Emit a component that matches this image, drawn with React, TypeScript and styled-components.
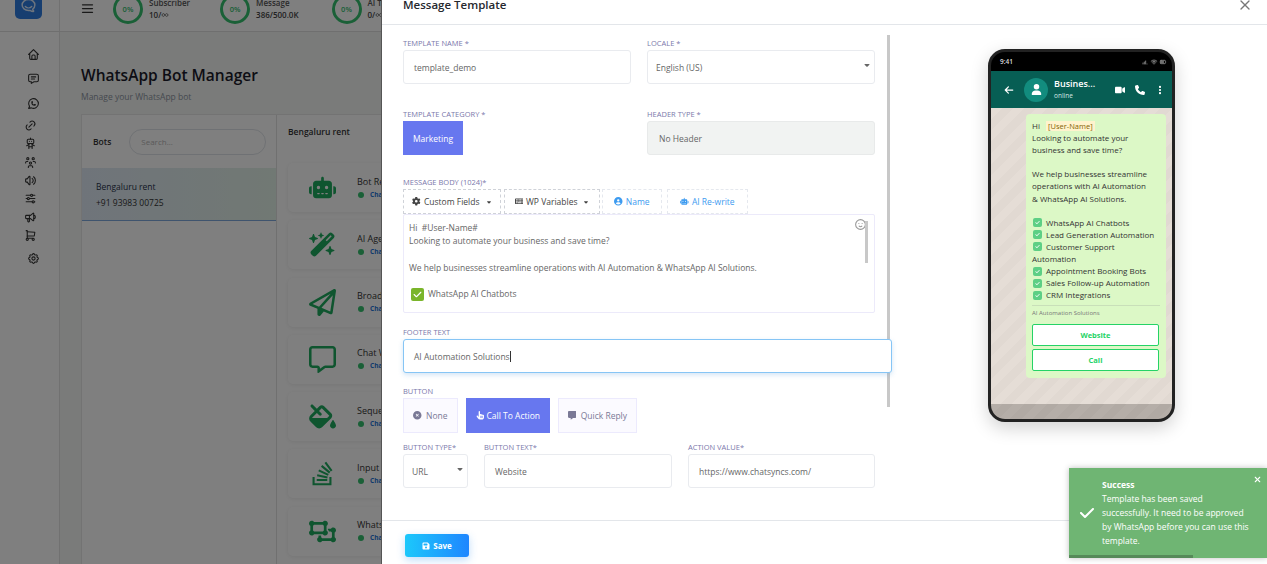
import React from "react";
import styled, { createGlobalStyle } from "styled-components";
import {
  FaRobot,
  FaWandMagicSparkles,
  FaRegPaperPlane,
  FaRegMessage,
  FaFillDrip,
  FaStackOverflow,
  FaObjectUngroup,
  FaGear,
  FaKeyboard,
  FaCircleUser,
  FaCircleXmark,
  FaHandPointer,
  FaMessage,
  FaFloppyDisk,
  FaCheck,
  FaArrowLeft,
  FaVideo,
  FaPhone,
  FaEllipsisVertical,
  FaXmark,
  FaUser,
  FaCaretDown,
} from "react-icons/fa6";
import {
  TbHome,
  TbMessage,
  TbBrandWhatsapp,
  TbLink,
  TbRobot,
  TbUsersGroup,
  TbVolume,
  TbAdjustmentsHorizontal,
  TbSpeakerphone,
  TbShoppingCart,
  TbSettings,
  TbMenu2,
  TbInfinity,
  TbMoodSmile,
  TbX,
  TbBrandHipchat,
  TbAntennaBars4,
  TbWifi,
  TbBattery3,
} from "react-icons/tb";

const GlobalStyle = createGlobalStyle`
  html, body {
    margin: 0;
    padding: 0;
    overflow: hidden;
  }
  * {
    box-sizing: border-box;
  }
  body {
    font-family: "Open Sans", "Liberation Sans", sans-serif;
  }
`;

const Screen = styled.div`
  position: relative;
  width: 1267px;
  height: 564px;
  overflow: hidden;
  background: #f4f7f5;
`;

/* page behind the modal */
const Shell = styled.div`
  display: flex;
  margin-top: -8px;
  height: 572px;
`;
const Sidebar = styled.aside`
  width: 60px;
  flex: none;
  background: #fff;
  border-right: 1px solid #e2e2e2;
`;
const LogoRow = styled.div`
  height: 40px;
  padding-left: 15px;
  border-bottom: 1px solid #dedede;
  margin-right: -1px;
`;
const Logo = styled.div`
  width: 27px;
  height: 27px;
  border-radius: 5px;
  background: #2f7de1;
  color: #dbe9fb;
  display: flex;
  align-items: center;
  justify-content: center;
  font-size: 17px;
`;
const NavList = styled.nav`
  display: flex;
  flex-direction: column;
  padding-top: 10px;
`;
const NavIcon = styled.div<{ $left: number; $h: number }>`
  height: ${({ $h }) => $h}px;
  padding-left: ${({ $left }) => $left}px;
  display: flex;
  align-items: center;
  color: #333;
  font-size: 13px;
`;

const Main = styled.main`
  flex: 1;
  min-width: 0;
`;
const TopBar = styled.header`
  height: 40px;
  background: #fff;
  border-bottom: 1px solid #dedede;
  display: flex;
  align-items: center;
  padding: 0 0 6px 20px;
  color: #333;
  font-size: 15px;
`;
const StatGroup = styled.div<{ $left: number }>`
  display: flex;
  align-items: center;
  margin-left: ${({ $left }) => $left}px;
  gap: 6px;
`;
const Ring = styled.div`
  width: 30px;
  height: 30px;
  border-radius: 50%;
  border: 3px solid #35c06f;
  color: #35c06f;
  font-size: 7.5px;
  font-weight: 600;
  display: flex;
  align-items: center;
  justify-content: center;
`;
const StatText = styled.div`
  font-size: 8px;
  line-height: 12px;
  color: #555;
  font-weight: 600;
  white-space: nowrap;
  display: flex;
  flex-direction: column;
`;
const StatValue = styled.span`
  display: flex;
  align-items: center;
  color: #444;
`;
const PageBody = styled.div`
  padding: 32px 0 0 21px;
`;
const PageTitle = styled.h1`
  margin: 0;
  font-size: 15.5px;
  line-height: 22px;
  font-weight: 600;
  color: #1b1b2a;
`;
const PageSub = styled.p`
  margin: 5px 0 0;
  font-size: 8.5px;
  line-height: 12px;
  color: #8c93a0;
`;
const ManagerCard = styled.div`
  margin-top: 11px;
  display: flex;
  background: #fff;
  border: 1px solid #e6e6e6;
  height: 470px;
`;
const BotsPane = styled.div`
  width: 195px;
  flex: none;
  border-right: 1px solid #e0e0e0;
`;
const BotsHead = styled.div`
  height: 53px;
  display: flex;
  align-items: center;
  padding: 0 10px 0 11px;
  gap: 18px;
  font-size: 8.5px;
  font-weight: 600;
  color: #333;
`;
const BotSearch = styled.div`
  flex: 1;
  height: 26px;
  border: 1px solid #dfe3e8;
  border-radius: 13px;
  padding-left: 11px;
  display: flex;
  align-items: center;
  font-size: 8px;
  font-weight: 400;
  color: #b5b5b5;
`;
const BotItem = styled.div`
  height: 53px;
  padding: 11px 14px;
  background: linear-gradient(90deg, #dfe9f5, #e3f2e8);
  border-bottom: 1px solid #7fa8dc;
  font-size: 8.5px;
  line-height: 16px;
  color: #26314a;
`;
const BotPhone = styled.div`
  color: #333;
`;
const FeaturesPane = styled.div`
  flex: 1;
  min-width: 0;
  padding: 11px 11px 0;
`;
const FeaturesTitle = styled.div`
  font-size: 8.5px;
  font-weight: 600;
  color: #333;
  margin-bottom: 26px;
`;
const FeatureList = styled.div`
  display: flex;
  flex-direction: column;
  gap: 8.3px;
`;
const FeatureCard = styled.div`
  height: 49px;
  display: flex;
  align-items: center;
  background: #fff;
  border-radius: 5px;
  box-shadow: 0 1px 4px rgba(0, 0, 0, 0.08);
`;
const FeatureIcon = styled.div`
  width: 69px;
  flex: none;
  display: flex;
  justify-content: center;
  color: #1faa5f;
  font-size: 27px;
`;
const FeatureName = styled.div`
  font-size: 9px;
  line-height: 14px;
  color: #333;
  white-space: nowrap;
`;
const FeatureStatus = styled.div`
  display: flex;
  align-items: center;
  gap: 6px;
  font-size: 6.5px;
  font-weight: 700;
  line-height: 12px;
  color: #1d74d8;
  white-space: nowrap;
`;
const StatusDot = styled.span`
  width: 6px;
  height: 6px;
  border-radius: 50%;
  background: #35c06f;
  margin-left: 1px;
`;

const Backdrop = styled.div`
  position: absolute;
  inset: 0;
  background: rgba(0, 0, 0, 0.5);
`;

/* modal */
const Modal = styled.section`
  position: absolute;
  top: 0;
  right: 0;
  bottom: 0;
  width: 886px;
  background: #fff;
  display: flex;
  flex-direction: column;
  border-left: 1px solid #555;
`;
const ModalHead = styled.div`
  height: 25px;
  flex: none;
  border-bottom: 1px solid #e3e6ea;
  padding-left: 21px;
  display: flex;
  justify-content: space-between;
`;
const ModalTitle = styled.h2`
  margin: -5px 0 0;
  font-size: 11.5px;
  line-height: 20px;
  font-weight: 600;
  color: #25282e;
`;
const CloseButton = styled.div`
  color: #777;
  font-size: 16px;
  margin: -4px 14px 0 0;
  height: 16px;
`;
const ModalBody = styled.div`
  flex: 1;
  display: flex;
  min-height: 0;
`;
const FormPane = styled.div`
  position: relative;
  width: 510px;
  flex: none;
  padding: 12px 0 0 21px;
`;
const PaneScroll = styled.div`
  position: absolute;
  left: 505px;
  top: 10px;
  width: 3px;
  height: 372px;
  background: #c8c8c8;
`;
const Row = styled.div<{ $columns: string; $gap: number; $top?: number }>`
  display: grid;
  grid-template-columns: ${({ $columns }) => $columns};
  column-gap: ${({ $gap }) => $gap}px;
  width: 472px;
  margin-top: ${({ $top }) => $top ?? 0}px;
`;
const Label = styled.div<{ $top?: number }>`
  height: 13px;
  margin-top: ${({ $top }) => $top ?? 0}px;
  font-size: 7.5px;
  line-height: 13px;
  color: #7b78ab;
  white-space: nowrap;
`;
const Box = styled.div<{ $focus?: boolean; $muted?: boolean; $width?: number }>`
  position: relative;
  height: ${({ $focus }) => ($focus ? 34 : 34)}px;
  width: ${({ $width }) => ($width ? `${$width}px` : "auto")};
  background: ${({ $muted }) => ($muted ? "#f1f3f2" : "#fff")};
  border: 1px solid ${({ $focus, $muted }) => ($focus ? "#86c5f5" : $muted ? "#e8eaea" : "#e9ebef")};
  border-radius: 3px;
  padding-left: ${({ $muted }) => ($muted ? 11 : 10)}px;
  display: flex;
  align-items: center;
  font-size: 8.5px;
  color: #666;
  white-space: nowrap;
  box-shadow: ${({ $focus }) => ($focus ? "0 2px 5px rgba(80,150,220,.25)" : "none")};
`;
const SelectBox = styled(Box)<{ $pad: number }>`
  padding-left: ${({ $pad }) => $pad}px;
`;
const Arrow = styled.span`
  position: absolute;
  right: 3px;
  top: 9px;
  font-size: 8px;
  color: #666;
`;
const Caret = styled.span`
  display: inline-block;
  width: 1px;
  height: 11px;
  background: #333;
  margin-left: 0;
`;
const ChoiceRow = styled.div`
  display: flex;
  gap: 8px;
`;
const Choice = styled.div<{ $active?: boolean; $width: number }>`
  width: ${({ $width }) => $width}px;
  height: 35px;
  display: flex;
  align-items: center;
  justify-content: center;
  gap: 2px;
  font-size: 8.5px;
  color: ${({ $active }) => ($active ? "#fff" : "#7a7996")};
  background: ${({ $active }) => ($active ? "#6777ef" : "#fbfaff")};
  border: 1px solid ${({ $active }) => ($active ? "#6777ef" : "#eceafd")};
  white-space: nowrap;
`;
const CategoryChoice = styled(Choice)`
  height: 34px;
`;
const ToolRow = styled.div`
  display: flex;
  height: 25px;
`;
const ToolButton = styled.div<{ $width: number; $left: number; $link?: boolean }>`
  width: ${({ $width }) => $width}px;
  margin-left: ${({ $left }) => $left}px;
  display: flex;
  align-items: center;
  justify-content: center;
  gap: 3px;
  font-size: 8.5px;
  color: ${({ $link }) => ($link ? "#3d9bf0" : "#444")};
  border: 1px dashed ${({ $link }) => ($link ? "#e5e8ee" : "#cfd2d8")};
  white-space: nowrap;
`;
const SmallCaret = styled.span`
  font-size: 6px;
  margin-left: 3px;
  display: flex;
`;
const MessageBox = styled.div`
  position: relative;
  width: 472px;
  height: 99px;
  border: 1px solid #eceafa;
  border-radius: 2px;
  padding: 6px 5px;
  font-size: 8.5px;
  line-height: 13.3px;
  color: #666;
  white-space: nowrap;
`;
const BodyScroll = styled.div`
  position: absolute;
  right: 6px;
  top: 6px;
  width: 3px;
  height: 42px;
  background: #c8c8c8;
`;
const Smiley = styled.div`
  position: absolute;
  right: 7px;
  top: 3px;
  font-size: 13px;
  line-height: 13px;
  color: #999;
`;
const Blank = styled.div`
  height: 13.3px;
`;
const CheckLine = styled.div`
  display: flex;
  align-items: center;
  gap: 4px;
  margin-left: 2px;
  height: 13.3px;
`;
const GreenCheck = styled.span<{ $size: number; $color: string }>`
  width: ${({ $size }) => $size}px;
  height: ${({ $size }) => $size}px;
  flex: none;
  border-radius: 2px;
  background: ${({ $color }) => $color};
  color: #fff;
  font-size: ${({ $size }) => $size - 4}px;
  display: inline-flex;
  align-items: center;
  justify-content: center;
`;
const ModalFoot = styled.div`
  height: 44px;
  flex: none;
  border-top: 1px solid #e3e6ea;
  padding: 13px 0 0 23px;
`;
const SaveButton = styled.div`
  width: 64px;
  height: 23px;
  border-radius: 3px;
  background: linear-gradient(90deg, #1cc8fb, #1e86ff);
  color: #fff;
  font-size: 8px;
  font-weight: 700;
  display: flex;
  align-items: center;
  justify-content: center;
  gap: 3px;
  box-shadow: 0 3px 8px rgba(40, 140, 240, 0.3);
`;

/* phone preview */
const PreviewPane = styled.div`
  flex: 1;
  padding: 24px 0 0 96px;
`;
const Phone = styled.div`
  width: 187px;
  height: 373px;
  background: #000;
  border: 3px solid #222;
  border-radius: 17px;
  overflow: hidden;
  display: flex;
  flex-direction: column;
  box-shadow: 0 6px 18px rgba(0, 0, 0, 0.18);
`;
const StatusBar = styled.div`
  height: 19px;
  flex: none;
  display: flex;
  align-items: center;
  justify-content: space-between;
  padding: 0 5px 0 9px;
  color: #ddd;
  font-size: 6.5px;
  font-weight: 600;
`;
const StatusIcons = styled.div`
  display: flex;
  align-items: center;
  gap: 1px;
  font-size: 8px;
  color: #bbb;
`;
const ChatHead = styled.div`
  height: 37px;
  flex: none;
  background: #075e54;
  color: #fff;
  display: flex;
  align-items: center;
  padding: 0 5px 0 13px;
  font-size: 10px;
`;
const Avatar = styled.div`
  width: 24px;
  height: 24px;
  margin-left: 10px;
  border-radius: 50%;
  background: #128c7e;
  display: flex;
  align-items: center;
  justify-content: center;
  font-size: 11px;
`;
const ChatName = styled.div`
  margin-left: 6px;
  width: 55px;
  font-size: 9px;
  line-height: 12px;
  font-weight: 600;
  white-space: nowrap;
`;
const ChatOnline = styled.div`
  font-size: 6.5px;
  line-height: 11px;
  font-weight: 400;
  color: #d5e8e5;
`;
const ChatActions = styled.div`
  display: flex;
  align-items: center;
  gap: 10px;
  margin-left: 6px;
`;
const ChatArea = styled.div`
  flex: 1;
  min-height: 0;
  padding: 6px 0 0 35px;
  background: repeating-linear-gradient(135deg, #e5ddd6 0 8px, #e1d9d2 8px 16px);
`;
const Bubble = styled.div`
  width: 140px;
  height: 264px;
  padding: 6px 6px 0;
  background: #dcf8c6;
  border-radius: 4px;
  font-size: 8px;
  line-height: 12.1px;
  color: #333;
`;
const BubbleLine = styled.div`
  white-space: nowrap;
  min-height: 12.1px;
`;
const Mention = styled.span`
  margin-left: 4px;
  padding: 0 2px;
  background: #fff3cd;
  color: #856404;
  font-size: 7.5px;
`;
const BubbleCheck = styled(BubbleLine)`
  display: flex;
  align-items: center;
  gap: 4px;
  margin-left: 1px;
`;
const BubbleDivider = styled.div`
  margin-top: 4px;
  border-top: 1px solid #c9dfb9;
`;
const BubbleFooter = styled.div`
  font-size: 6px;
  line-height: 15px;
  color: #777;
  white-space: nowrap;
`;
const BubbleButton = styled.div`
  height: 22px;
  margin: 3px 1px 0 0;
  background: #fff;
  border: 1px solid #25d366;
  border-radius: 2px;
  color: #25d366;
  font-size: 7.5px;
  font-weight: 700;
  display: flex;
  align-items: center;
  justify-content: center;
`;
const ChatBar = styled.div`
  height: 15px;
  flex: none;
  background: repeating-linear-gradient(135deg, #b5aea8 0 8px, #b1aaa4 8px 16px);
`;

/* toast */
const Toast = styled.div`
  position: absolute;
  right: 0;
  bottom: 6px;
  width: 198px;
  height: 90px;
  background: #6fb573;
  color: #fff;
  display: flex;
  align-items: center;
  padding-left: 10px;
  box-shadow: 0 0 6px rgba(0, 0, 0, 0.25);
`;
const ToastCheck = styled.div`
  width: 23px;
  flex: none;
  font-size: 16px;
  display: flex;
`;
const ToastText = styled.div`
  font-size: 8.5px;
  line-height: 14px;
  white-space: nowrap;
`;
const ToastTitle = styled.div`
  font-weight: 700;
`;
const ToastClose = styled.div`
  position: absolute;
  right: 5px;
  top: 7px;
  font-size: 9px;
  display: flex;
`;
const ToastBar = styled.div`
  position: absolute;
  left: 0;
  bottom: 0;
  width: 124px;
  height: 3px;
  background: #568a59;
`;

const navItems = [
  { icon: <TbHome />, left: 27, h: 24 },
  { icon: <TbMessage />, left: 27, h: 25 },
  { icon: <TbBrandWhatsapp />, left: 27, h: 25 },
  { icon: <TbLink />, left: 24, h: 18 },
  { icon: <TbRobot />, left: 24, h: 19 },
  { icon: <TbUsersGroup />, left: 24, h: 18 },
  { icon: <TbVolume />, left: 24, h: 18 },
  { icon: <TbAdjustmentsHorizontal />, left: 24, h: 19 },
  { icon: <TbSpeakerphone />, left: 24, h: 18 },
  { icon: <TbShoppingCart />, left: 24, h: 18 },
  { icon: <TbSettings />, left: 27, h: 28 },
];

const features = [
  { name: "Bot Reply", icon: <FaRobot /> },
  { name: "AI Agent", icon: <FaWandMagicSparkles /> },
  { name: "Broadcast", icon: <FaRegPaperPlane /> },
  { name: "Chat Widget", icon: <FaRegMessage /> },
  { name: "Sequence", icon: <FaFillDrip /> },
  { name: "Input Flow", icon: <FaStackOverflow /> },
  { name: "WhatsApp Flow", icon: <FaObjectUngroup /> },
];

const stats = [
  { name: "Subscriber", value: "10/", infinite: true, left: 18 },
  { name: "Message", value: "386/500.0K", infinite: false, left: 30 },
  { name: "AI Token", value: "0/", infinite: true, left: 33 },
];

const checks = [
  "WhatsApp AI Chatbots",
  "Lead Generation Automation",
  "Customer Support",
];
const moreChecks = [
  "Appointment Booking Bots",
  "Sales Follow-up Automation",
  "CRM Integrations",
];

const App = () => {
  return (
    <Screen>
      <GlobalStyle />
      <Shell>
        <Sidebar>
          <LogoRow>
            <Logo>
              <TbBrandHipchat />
            </Logo>
          </LogoRow>
          <NavList>
            {navItems.map((item, i) => (
              <NavIcon key={i} $left={item.left} $h={item.h}>
                {item.icon}
              </NavIcon>
            ))}
          </NavList>
        </Sidebar>
        <Main>
          <TopBar>
            <TbMenu2 />
            {stats.map((s) => (
              <StatGroup key={s.name} $left={s.left}>
                <Ring>0%</Ring>
                <StatText>
                  {s.name}
                  <StatValue>
                    {s.value}
                    {s.infinite && <TbInfinity />}
                  </StatValue>
                </StatText>
              </StatGroup>
            ))}
          </TopBar>
          <PageBody>
            <PageTitle>WhatsApp Bot Manager</PageTitle>
            <PageSub>Manage your WhatsApp bot</PageSub>
            <ManagerCard>
              <BotsPane>
                <BotsHead>
                  Bots
                  <BotSearch>Search...</BotSearch>
                </BotsHead>
                <BotItem>
                  Bengaluru rent
                  <BotPhone>+91 93983 00725</BotPhone>
                </BotItem>
              </BotsPane>
              <FeaturesPane>
                <FeaturesTitle>Bengaluru rent</FeaturesTitle>
                <FeatureList>
                  {features.map((f) => (
                    <FeatureCard key={f.name}>
                      <FeatureIcon>{f.icon}</FeatureIcon>
                      <div>
                        <FeatureName>{f.name}</FeatureName>
                        <FeatureStatus>
                          <StatusDot />
                          Change settings
                        </FeatureStatus>
                      </div>
                    </FeatureCard>
                  ))}
                </FeatureList>
              </FeaturesPane>
            </ManagerCard>
          </PageBody>
        </Main>
      </Shell>
      <Backdrop />
      <Modal>
        <ModalHead>
          <ModalTitle>Message Template</ModalTitle>
          <CloseButton>
            <TbX />
          </CloseButton>
        </ModalHead>
        <ModalBody>
          <FormPane>
            <PaneScroll />
            <Row $columns="228px 228px" $gap={16}>
              <div>
                <Label>TEMPLATE NAME *</Label>
                <Box>template_demo</Box>
              </div>
              <div>
                <Label>LOCALE *</Label>
                <SelectBox $pad={8}>
                  English (US)
                  <Arrow>
                    <FaCaretDown />
                  </Arrow>
                </SelectBox>
              </div>
            </Row>
            <Row $columns="228px 228px" $gap={16} $top={24}>
              <div>
                <Label>TEMPLATE CATEGORY *</Label>
                <CategoryChoice $active $width={60}>
                  Marketing
                </CategoryChoice>
              </div>
              <div>
                <Label>HEADER TYPE *</Label>
                <Box $muted>No Header</Box>
              </div>
            </Row>
            <Label $top={21}>MESSAGE BODY (1024)*</Label>
            <ToolRow>
              <ToolButton $width={98} $left={0}>
                <FaGear />
                Custom Fields
                <SmallCaret>
                  <FaCaretDown />
                </SmallCaret>
              </ToolButton>
              <ToolButton $width={96} $left={3}>
                <FaKeyboard />
                WP Variables
                <SmallCaret>
                  <FaCaretDown />
                </SmallCaret>
              </ToolButton>
              <ToolButton $width={60} $left={2} $link>
                <FaCircleUser />
                Name
              </ToolButton>
              <ToolButton $width={81} $left={5} $link>
                <FaRobot />
                AI Re-write
              </ToolButton>
            </ToolRow>
            <MessageBox>
              <Smiley>
                <TbMoodSmile />
              </Smiley>
              <BodyScroll />
              <div>Hi &nbsp;#User-Name#</div>
              <div>Looking to automate your business and save time?</div>
              <Blank />
              <div>We help businesses streamline operations with AI Automation &amp; WhatsApp AI Solutions.</div>
              <Blank />
              <CheckLine>
                <GreenCheck $size={13} $color="#7ab52a">
                  <FaCheck />
                </GreenCheck>
                WhatsApp AI Chatbots
              </CheckLine>
            </MessageBox>
            <Label $top={13}>FOOTER TEXT</Label>
            <Box $focus>
              AI Automation Solutions
              <Caret />
            </Box>
            <Label $top={12}>BUTTON</Label>
            <ChoiceRow>
              <Choice $width={55}>
                <FaCircleXmark />
                &nbsp;None
              </Choice>
              <Choice $active $width={84}>
                <FaHandPointer />
                Call To Action
              </Choice>
              <Choice $width={79}>
                <FaMessage />
                &nbsp;Quick Reply
              </Choice>
            </ChoiceRow>
            <Row $columns="65px 188px 187px" $gap={16} $top={8}>
              <div>
                <Label>BUTTON TYPE*</Label>
                <SelectBox $pad={8}>
                  URL
                  <Arrow>
                    <FaCaretDown />
                  </Arrow>
                </SelectBox>
              </div>
              <div>
                <Label>BUTTON TEXT*</Label>
                <Box>Website</Box>
              </div>
              <div>
                <Label>ACTION VALUE*</Label>
                <Box>https://www.chatsyncs.com/</Box>
              </div>
            </Row>
          </FormPane>
          <PreviewPane>
            <Phone>
              <StatusBar>
                9:41
                <StatusIcons>
                  <TbAntennaBars4 />
                  <TbWifi />
                  <TbBattery3 />
                </StatusIcons>
              </StatusBar>
              <ChatHead>
                <FaArrowLeft />
                <Avatar>
                  <FaUser />
                </Avatar>
                <ChatName>
                  Busines...
                  <ChatOnline>online</ChatOnline>
                </ChatName>
                <ChatActions>
                  <FaVideo />
                  <FaPhone />
                  <FaEllipsisVertical />
                </ChatActions>
              </ChatHead>
              <ChatArea>
                <Bubble>
                  <BubbleLine>
                    Hi <Mention>[User-Name]</Mention>
                  </BubbleLine>
                  <BubbleLine>Looking to automate your</BubbleLine>
                  <BubbleLine>business and save time?</BubbleLine>
                  <BubbleLine />
                  <BubbleLine>We help businesses streamline</BubbleLine>
                  <BubbleLine>operations with AI Automation</BubbleLine>
                  <BubbleLine>&amp; WhatsApp AI Solutions.</BubbleLine>
                  <BubbleLine />
                  {checks.map((c) => (
                    <BubbleCheck key={c}>
                      <GreenCheck $size={9} $color="#5dcf85">
                        <FaCheck />
                      </GreenCheck>
                      {c}
                    </BubbleCheck>
                  ))}
                  <BubbleLine>Automation</BubbleLine>
                  {moreChecks.map((c) => (
                    <BubbleCheck key={c}>
                      <GreenCheck $size={9} $color="#5dcf85">
                        <FaCheck />
                      </GreenCheck>
                      {c}
                    </BubbleCheck>
                  ))}
                  <BubbleDivider />
                  <BubbleFooter>AI Automation Solutions</BubbleFooter>
                  <BubbleButton>Website</BubbleButton>
                  <BubbleButton>Call</BubbleButton>
                </Bubble>
              </ChatArea>
              <ChatBar />
            </Phone>
          </PreviewPane>
        </ModalBody>
        <ModalFoot>
          <SaveButton>
            <FaFloppyDisk />
            Save
          </SaveButton>
        </ModalFoot>
      </Modal>
      <Toast>
        <ToastCheck>
          <FaCheck />
        </ToastCheck>
        <ToastText>
          <ToastTitle>Success</ToastTitle>
          Template has been saved
          <br />
          successfully. It need to be approved
          <br />
          by WhatsApp before you can use this
          <br />
          template.
        </ToastText>
        <ToastClose>
          <FaXmark />
        </ToastClose>
        <ToastBar />
      </Toast>
    </Screen>
  );
};

export default App;
